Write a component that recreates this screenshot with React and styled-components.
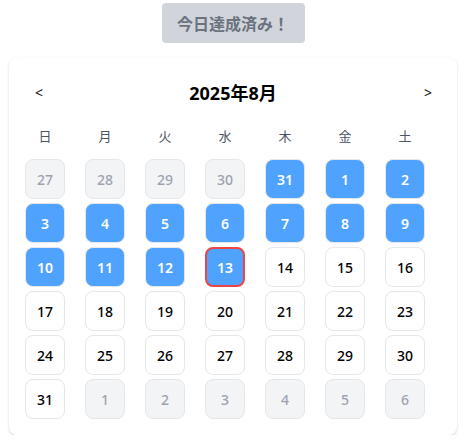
import React from "react";
import styled, { createGlobalStyle } from "styled-components";

const GlobalStyle = createGlobalStyle`
  body {
    margin: 0;
    background: #fff;
    font-family: "Noto Sans", "Noto Sans CJK JP", sans-serif;
  }
`;

const Page = styled.div`
  display: flex;
  flex-direction: column;
  align-items: center;
  padding: 3px 8px 0 9px;
  width: 448px;
`;

const DoneButton = styled.button`
  width: 143px;
  height: 40px;
  border: none;
  border-radius: 4px;
  background: #d1d5db;
  color: #6b7280;
  font-family: inherit;
  font-size: 16px;
  font-weight: 700;
  margin-bottom: 15px;
  cursor: not-allowed;
`;

const Card = styled.div`
  width: 100%;
  box-sizing: border-box;
  background: #fff;
  border-radius: 8px;
  box-shadow: 0 1px 3px rgba(0, 0, 0, 0.12), 0 1px 2px rgba(0, 0, 0, 0.06);
  padding: 16px;
`;

const Header = styled.div`
  display: flex;
  align-items: center;
  justify-content: space-between;
  height: 36px;
  margin-bottom: 16px;
`;

const NavButton = styled.button`
  border: none;
  background: none;
  font-family: inherit;
  font-size: 14px;
  color: #111;
  padding: 4px 9px 4px 10px;
  cursor: pointer;
`;

const Title = styled.h2`
  margin: 0;
  font-size: 18px;
  font-weight: 700;
  color: #000;
`;

const Grid = styled.div`
  display: grid;
  grid-template-columns: repeat(7, 40px);
  column-gap: 20px;
  row-gap: 4px;
`;

const WeekDay = styled.div`
  text-align: center;
  font-size: 13px;
  line-height: 20px;
  color: #4b5563;
  margin-bottom: 9px;
`;

const Day = styled.div`
  width: 40px;
  height: 40px;
  box-sizing: border-box;
  display: flex;
  align-items: center;
  justify-content: center;
  border-radius: 8px;
  font-size: 14px;
  font-weight: ${(p) => (p.$done ? 600 : 500)};
  border: ${(p) => (p.$today ? "2px solid #ef4444" : "1px solid #e5e7eb")};
  background: ${(p) => (p.$done ? "#4fa3fe" : p.$outside ? "#f3f4f6" : "#fff")};
  color: ${(p) => (p.$done ? "#fff" : p.$outside ? "#9ca3af" : "#000")};
`;

const weekdays = ["日", "月", "火", "水", "木", "金", "土"];

const days = [
  ...[27, 28, 29, 30].map((d) => ({ d, outside: true })),
  { d: 31, done: true },
  ...Array.from({ length: 31 }, (_, i) => ({
    d: i + 1,
    done: i + 1 <= 13,
    today: i + 1 === 13,
  })),
  ...[1, 2, 3, 4, 5, 6].map((d) => ({ d, outside: true })),
];

export default function App() {
  return (
    <>
      <GlobalStyle />
      <Page>
        <DoneButton disabled>今日達成済み！</DoneButton>
        <Card>
          <Header>
            <NavButton>&lt;</NavButton>
            <Title>2025年8月</Title>
            <NavButton>&gt;</NavButton>
          </Header>
          <Grid>
            {weekdays.map((w) => (
              <WeekDay key={w}>{w}</WeekDay>
            ))}
            {days.map((x, i) => (
              <Day key={i} $done={x.done} $outside={x.outside} $today={x.today}>
                {x.d}
              </Day>
            ))}
          </Grid>
        </Card>
      </Page>
    </>
  );
}
